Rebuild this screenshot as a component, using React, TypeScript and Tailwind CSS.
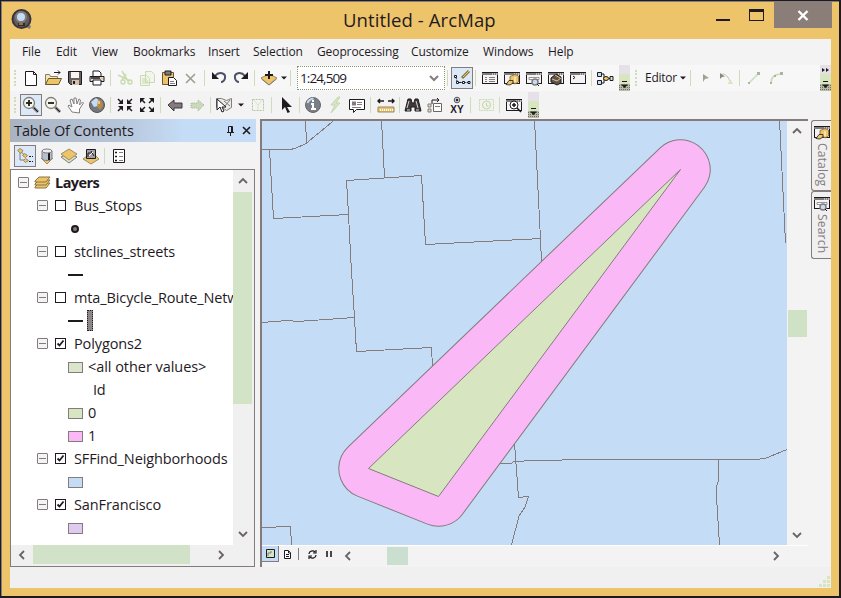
import React from 'react';
import type { ReactNode } from 'react';

const K = '#1f1a1f';
const G = '#847c7c';
const Y = '#edc46a';
const GR = '#d7e5c0';
const B = '#c5dcf6';

function Icon({ children, className = 'w-[22px]' }: { children: ReactNode; className?: string }) {
  return (
    <span className={`${className} flex h-[22px] shrink-0 items-center justify-center`}>
      <svg width="18" height="18" viewBox="0 0 18 18" fill="none" stroke={K} strokeWidth="1">
        {children}
      </svg>
    </span>
  );
}

function Active({ children }: { children: ReactNode }) {
  return (
    <span className="flex h-[22px] w-[22px] shrink-0 items-center justify-center border border-[#847c7c] bg-[#dbe8f7]">
      {children}
    </span>
  );
}

function Sep({ className = 'w-1.5' }: { className?: string }) {
  return (
    <span className={`${className} flex h-4 shrink-0 pl-0.5`}>
      <span className="h-full w-px bg-[#cfdcbb]" />
    </span>
  );
}

function Grip() {
  return (
    <span className="flex h-4 w-2.5 shrink-0 justify-center">
      <span className="h-full border-l-2 border-dotted border-[#cfdcbb]" />
    </span>
  );
}

function Caret({ className = 'w-2' }: { className?: string }) {
  return (
    <span className={`${className} flex shrink-0 justify-center`}>
      <svg width="6" height="4" viewBox="0 0 6 4" fill={K}>
        <path d="M0 0.5h6L3 3.5z" />
      </svg>
    </span>
  );
}

function Overflow({ more = false }: { more?: boolean }) {
  return (
    <span className="flex h-[26px] w-[11px] shrink-0 flex-col bg-[#d7e5c0]">
      <svg width="11" height="26" viewBox="0 0 11 26">
        <path d="M0 0h11v9H0z" fill="#e6e0e8" />
        <path d="M0 19h11v7H0z" fill="#b9bda8" />
        <path d="M0 20.500h11M0 22.500h11M0 24.500h11" stroke="#6f7060" strokeDasharray="1 1" />
        {more && <path d="M2 3l3 2-3 2zM6 3l3 2-3 2z" fill={K} />}
        <path d="M3 16h5v1H3zM2 19.500h7L5.500 23z" fill={K} />
      </svg>
    </span>
  );
}

const WindowFrame = ({ w = 16 }: { w?: number }) => (
  <>
    <rect x="1.5" y="3.500" width={w - 1} height="11" fill="#f4f4f4" stroke={K} />
    <path d={`M1 3h${w}v3H1z`} fill={G} stroke="none" />
    <path d={`M1 3.500h${w}`} stroke={K} />
    <path d="M11 5h5" stroke="#fff" strokeDasharray="1 1" />
  </>
);

const CatalogArt = () => (
  <>
    <WindowFrame />
    <path d="M7 7.500l5-2 3.500 1.500v6l-3.500 2-3-2-2-2z" fill={Y} stroke="#7d622c" strokeWidth=".8" />
    <path d="M3 15.500l3-4h4v2.500l-3 2z" fill={Y} stroke={K} strokeWidth=".8" />
    <path d="M12 8v5" stroke="#fff" />
  </>
);

const SearchArt = () => (
  <>
    <WindowFrame />
    <path d="M4 8.500h10v2H4z" fill="#fff" stroke={G} strokeWidth=".8" />
    <circle cx="10" cy="13" r="3" fill={B} stroke={G} strokeWidth="1.5" />
    <path d="M12 15l2 2" stroke={K} />
  </>
);

const Magnifier = ({ plus }: { plus: boolean }) => (
  <>
    <path d="M11 11l5 5" stroke={G} strokeWidth="3" />
    <path d="M12 12l4 4" stroke={K} />
    <circle cx="7" cy="7" r="5.5" fill="#f2f7ec" stroke={G} strokeWidth="1.3" />
    <path d="M4 7h6" stroke={K} strokeWidth="1.8" />
    {plus && <path d="M7 4v6" stroke={K} strokeWidth="1.8" />}
  </>
);

const menus: [string, string][] = [
  ['File', 'w-[34px]'],
  ['Edit', 'w-[36px]'],
  ['View', 'w-[41px]'],
  ['Bookmarks', 'w-[75px]'],
  ['Insert', 'w-[45px]'],
  ['Selection', 'w-[64px]'],
  ['Geoprocessing', 'w-[94px]'],
  ['Customize', 'w-[72px]'],
  ['Windows', 'w-[65px]'],
  ['Help', 'w-[40px]'],
];

function StandardToolbar() {
  return (
    <div className="flex h-[26px] items-center bg-[#f7f7f7]">
      <Grip />
      <Icon>
        <path d="M3.500 2.500h8l3 3v11h-11z" fill="#fff" />
        <path d="M11.500 2.500v3h3" />
      </Icon>
      <Icon>
        <path d="M1.500 15.500v-10h4l1 2h7v3" fill="#fae5a9" stroke={G} />
        <path d="M1.500 15.500l3-6h13l-3 6z" fill={Y} stroke="#6a5732" />
        <path d="M10 3.500h6M14 1.500l2 2-2 2" />
      </Icon>
      <Icon>
        <path d="M2.500 2.500h13v13h-11l-2-2z" fill="#68615f" />
        <path d="M5 3h8v6H5z" fill="#f8f6f1" stroke="none" />
        <path d="M6 11h7v5H6z" fill="#d1c2ab" stroke="none" />
        <path d="M8 12v3" strokeWidth="2" />
      </Icon>
      <Icon>
        <path d="M5 7V2h6l2 2v3" fill="#fff" />
        <path d="M2 7.500h14v5H2z" fill="#e1ded7" />
        <path d="M5 11h8v5H5z" fill="#fff" />
        <path d="M3 9h9" strokeWidth="1.500" />
        <path d="M13 9.500h2" stroke={Y} />
      </Icon>
      <Sep />
      <Icon>
        <g stroke="#c9dcb1" strokeWidth="1.500">
          <path d="M6 2l6 10M10 5l-4 6M2 6l12 6" />
          <circle cx="7" cy="13" r="2" />
          <circle cx="14" cy="13" r="2" />
        </g>
      </Icon>
      <Icon>
        <g stroke="#c9dcb1" fill="#f2f5ed">
          <path d="M7.500 2.500h6l3 3v8h-9zM2.500 6.500h6l3 3v7h-9z" />
          <path d="M4 10h5M4 12h6M4 14h6" />
        </g>
      </Icon>
      <Icon>
        <path d="M2.500 3.500h11v12h-11z" fill={Y} stroke="#6a5732" />
        <path d="M5 2h6v4H5z" fill={G} />
        <path d="M8.500 8.500h5l3 3v5h-8z" fill="#fff" />
        <path d="M10 12.500h4M10 14.500h5" stroke={G} />
      </Icon>
      <Icon>
        <path d="M4 5l9 9M13 5l-9 9" stroke="#969f88" strokeWidth="1.500" />
      </Icon>
      <Sep />
      <Icon>
        <path d="M5 7c4-5 11-3 10 2-.3 2-2 4-4 4" stroke="#4d5267" strokeWidth="2" />
        <path d="M2 3v7h7z" fill={K} stroke="none" />
      </Icon>
      <Icon>
        <path d="M13 7C9 2 2 4 3 9c.3 2 2 4 4 4" stroke="#4d5267" strokeWidth="2" />
        <path d="M16 3v7H9z" fill={K} stroke="none" />
      </Icon>
      <Sep />
      <Icon>
        <path d="M1 9l8-4 8 4-8 7z" fill={Y} stroke="#988866" />
        <path d="M1.500 10l7.500 6 7.500-6" stroke={G} />
        <path d="M9 2v8M5 6h8" strokeWidth="2" />
      </Icon>
      <Caret />
      <Sep className="w-[9px]" />
      <div className="flex h-6 w-[148px] shrink-0 items-center justify-between border border-dotted border-[#8a9670] bg-white pr-[5px] pl-0.5">
        <span className="text-[13.500px] tracking-[-0.9px]">1:24,509</span>
        <svg width="10" height="7" viewBox="0 0 10 7" fill="none" stroke={G} strokeWidth="2">
          <path d="M1 1l4 4 4-4" />
        </svg>
      </div>
      <Sep />
      <Active>
        <svg width="20" height="20" viewBox="0 0 20 20" fill="none" stroke={K}>
          <path d="M3.500 8l2 6.500H17" strokeDasharray="3 1" />
          <path d="M2.500 7.500h2v2h-2zM4.500 13.500h2v2h-2zM10.500 13.500h2v2h-2zM16 13.500h2v2h-2z" fill="#fff" />
          <path d="M10 10l7-7" stroke="#8b763c" strokeWidth="3" />
          <path d="M11 9l6-6" stroke={Y} />
        </svg>
      </Active>
      <Sep />
      <Icon>
        <WindowFrame />
        <path d="M4 8.500h2M8 8.500h6M4 10.500h2M8 10.500h6M4 12.500h2M8 12.500h6" stroke={G} />
      </Icon>
      <Icon><CatalogArt /></Icon>
      <Icon><SearchArt /></Icon>
      <Icon>
        <WindowFrame />
        <path d="M4 9l5-4 5 3v6l-4 2-6-3z" fill="#5d5350" />
        <path d="M5 10l5 2 4-3M8 6l5 3" stroke={Y} />
      </Icon>
      <Icon>
        <WindowFrame />
        <path d="M4 7l2 1.500L4 10" />
      </Icon>
      <Sep className="w-[5px]" />
      <Icon>
        <path d="M5 5h3v9H4M8 9.500h3M13 9.500h3" />
        <path d="M1.500 3.500h4v4h-4zM1.500 11.500h4v4h-4z" fill={B} />
        <ellipse cx="10" cy="9.500" rx="2.500" ry="2" fill={Y} />
        <path d="M14 7.500h3v4h-3z" fill={GR} />
      </Icon>
      <span className="flex pl-[3px]"><Overflow /></span>
      <span className="flex pl-px"><Grip /></span>
      <span className="w-[34px] shrink-0 pl-1 text-[12px] tracking-[-0.25px] whitespace-nowrap">Editor</span>
      <Caret className="w-[13px] pl-0.5" />
      <Sep className="w-[5px]" />
      <Icon>
        <path d="M8 5v8l2-3 4-1z" fill="#9aa68f" stroke="none" />
      </Icon>
      <Icon>
        <path d="M3 4v6l2-2 3-.5z" fill="#858b7b" stroke="none" />
        <path d="M5 5c4 0 6 3 8 7" stroke="#b6c9a0" />
        <path d="M11 14l3-3 2 4h-5z" fill={GR} stroke="none" />
      </Icon>
      <Sep className="w-[6px]" />
      <Icon>
        <path d="M4 14L14 4" stroke="#cbdcb8" strokeWidth="1.500" />
        <path d="M12 3h3v3h-3zM3 13h2v2H3z" fill="#a9b89a" stroke="none" />
      </Icon>
      <Icon>
        <path d="M4 14c0-6 4-9 11-9" stroke="#cbdcb8" strokeWidth="1.500" />
        <path d="M13 3h3v3h-3zM3 13h2v2H3zM7 6h2v2H7z" fill="#a9b89a" stroke="none" />
      </Icon>
      <span className="ml-auto flex"><Overflow more /></span>
    </div>
  );
}

function ToolsToolbar() {
  return (
    <div className="flex h-7 items-center">
      <Grip />
      <Active>
        <svg width="18" height="18" viewBox="0 0 18 18" fill="none"><Magnifier plus /></svg>
      </Active>
      <Icon><Magnifier plus={false} /></Icon>
      <Icon>
        <path d="M6 16l-4-6 1-1 3 2-2-7 2-1 2 5V2l2 0 1 6 2-5 1.500 1-1 5 3-3 1 1-4 6v4z" fill="#fff" stroke="#847c7c" />
      </Icon>
      <Icon>
        <circle cx="9" cy="9" r="7.500" fill="#737781" stroke="#5a514e" />
        <path d="M3 6l5-4 4 3-2 5-4 1z" fill={B} stroke="none" />
        <path d="M10 4l4 1 1 5-3 4-3-3z" fill="#b58b45" stroke="none" />
        <path d="M10 5h2v3h-2z" fill={Y} stroke="none" />
      </Icon>
      <Sep />
      <Icon>
        <path d="M2 3l4 4M16 3l-4 4M2 15l4-4M16 15l-4-4" strokeWidth="1.500" />
        <path d="M7 3v5H2zM11 3v5h5zM7 15v-5H2zM11 15v-5h5z" fill={K} stroke="none" />
      </Icon>
      <Icon>
        <path d="M3 3l4 4M15 3l-4 4M3 15l4-4M15 15l-4-4" strokeWidth="1.500" />
        <path d="M2 2h5L2 7zM16 2h-5l5 5zM2 16h5l-5-5zM16 16h-5l5-5z" fill={K} stroke="none" />
      </Icon>
      <Sep />
      <Icon>
        <path d="M2 9l6-5v3h8v5H8v3z" fill={G} stroke="#3c383c" />
      </Icon>
      <Icon>
        <path d="M16 9l-6-5v3H3v5h7v3z" fill="#c9d9b9" stroke="#a8b49c" strokeDasharray="1 1" />
      </Icon>
      <Sep className="w-[5px]" />
      <Icon>
        <path d="M1.500 2.500h5l5 2 5-2v9l-5 3-4-3h-6z" fill="#e9ebe6" stroke={G} />
        <path d="M9 5l6 5M15 4l-5 6" stroke={G} />
        <path d="M2 3v11l3-3 2 5 2-1-2-4h4z" fill="#fff" />
      </Icon>
      <Caret className="w-3" />
      <Icon>
        <path d="M3.500 3.500h11v11h-11z" stroke="#b4c3a1" strokeDasharray="2 1" />
        <path d="M5 4l4 5 4-5M9 9v5" stroke={GR} />
      </Icon>
      <Sep />
      <Icon>
        <path d="M5 1v13l3-3 2.500 6 2.500-1-3-5h5z" fill={K} stroke="none" />
      </Icon>
      <Sep className="w-[5px]" />
      <Icon>
        <circle cx="9" cy="9" r="7.500" fill="#7b7f85" stroke="#65676b" />
        <path d="M3.500 7c1-3 3-4 6-4.500" stroke={B} strokeWidth="2" />
        <path d="M9 4v2M7 8h2v5M7 13h5" stroke="#fff" strokeWidth="2" />
      </Icon>
      <Icon>
        <path d="M12 1L5 9h4l-4 8 9-10h-4l4-6z" fill={GR} stroke="#c5d6b1" />
      </Icon>
      <Icon>
        <path d="M1.500 3.500h15v10h-8l-3 3v-3h-4z" fill="#fff" />
        <path d="M4 5.500h4v4H4z" fill={G} stroke="none" />
        <path d="M9 6.500h5M9 8.500h5M4 11.500h9" stroke={G} />
      </Icon>
      <Sep className="w-[7px]" />
      <Icon>
        <path d="M1 5h6M11 5h6M3 3L1 5l2 2M15 3l2 2-2 2" strokeWidth="1.500" />
        <path d="M1 11h16v5H1z" fill={Y} stroke="#9d8a60" />
        <path d="M3 14h14" stroke="#fff" strokeDasharray="1 1" strokeWidth="2" />
      </Icon>
      <Sep className="w-[5px]" />
      <Icon>
        <path d="M4 3h3l1 4h2l1-4h3l3 12h-6v-4H7v4H1z" fill="#3f393c" stroke={K} />
        <path d="M5 5l-2 7M12 5l2 7M3 14h3M12 14h3" stroke="#fff" strokeWidth=".8" />
      </Icon>
      <Icon>
        <path d="M7.500 7.500h8v8h-8z" fill="#fff" stroke="#69675e" />
        <path d="M2 8h3v3H2zM2 13h3v3H2z" fill={GR} stroke={G} />
        <path d="M6 8V4h7M11 2l2 2-2 2" />
        <path d="M9 10.500h5" stroke={G} />
      </Icon>
      <Icon>
        <circle cx="9" cy="4" r="2.800" stroke="#4e5161" />
        <circle cx="9" cy="4" r="1" fill={K} />
        <text x="9" y="17" textAnchor="middle" fill={K} stroke="none" fontSize="10" fontWeight="700" fontFamily="Liberation Sans">XY</text>
      </Icon>
      <Sep className="w-[7px]" />
      <Icon>
        <path d="M2.500 3.500h14v11h-14z" fill="#f0f4e9" stroke="#c9d8b8" strokeDasharray="2 1" />
        <circle cx="9.500" cy="9" r="4" stroke="#c3d2b2" />
        <path d="M9.500 7v3h2" stroke="#c3d2b2" />
      </Icon>
      <Sep />
      <Icon>
        <WindowFrame />
        <circle cx="9" cy="9" r="4" fill="#fff" />
        <path d="M7 9h4M9 7v4M12 12l4 4" strokeWidth="1.500" />
      </Icon>
      <span className="flex pl-[3px]"><Overflow /></span>
    </div>
  );
}

function Expander() {
  return (
    <span className="flex size-[11px] shrink-0 items-center justify-center rounded-[1px] border border-[#847c7c] bg-[#f3f5f4]">
      <span className="h-px w-[7px] bg-[#847c7c]" />
    </span>
  );
}

function Check({ on }: { on: boolean }) {
  return (
    <span className="ml-[7px] flex size-[11px] shrink-0 border border-[#1f1a1f] bg-white">
      {on && (
        <svg width="9" height="9" viewBox="0 0 9 9" fill="none" stroke={K} strokeWidth="1.800">
          <path d="M1.500 4.500l2 2 4-5" />
        </svg>
      )}
    </span>
  );
}

function LayerRow({ name, on = false, tracking = 'tracking-[-0.12px]' }: { name: string; on?: boolean; tracking?: string }) {
  return (
    <div className="flex h-[23px] items-center pl-[26px]">
      <Expander />
      <Check on={on} />
      <span className={`${tracking} pl-2 text-[14.500px] leading-[23px] whitespace-nowrap`}>{name}</span>
    </div>
  );
}

function Swatch({ color, label = '' }: { color: string; label?: string }) {
  return (
    <div className="flex h-[23px] items-center pl-[57px]">
      <span className={`${color} mt-px h-[11px] w-[15px] shrink-0 border border-[#847c7c]`} />
      <span className="pl-[5px] text-[14.500px] leading-[23px] tracking-[-0.05px] whitespace-nowrap">{label}</span>
    </div>
  );
}

function Chevron({ turn = '' }: { turn?: string }) {
  return (
    <svg className={turn} width="10" height="10" viewBox="0 0 10 10" fill="none" stroke="#6b6363" strokeWidth="1.800">
      <path d="M1 7l4-4 4 4" />
    </svg>
  );
}

function Contents() {
  return (
    <section className="flex w-[246px] shrink-0 flex-col">
      <header className="flex h-[23px] shrink-0 items-center justify-between bg-[linear-gradient(to_right,#a9b3c2,#b6c6da_45%,#c5dcf6_70%)] pr-[5px] pl-1">
        <h2 className="pt-px text-[14.500px] tracking-[-0.1px] whitespace-nowrap">Table Of Contents</h2>
        <span className="flex items-center gap-[7px]">
          <svg width="9" height="10" viewBox="0 0 9 10" fill="none" stroke={K}>
            <path d="M2.500 6V.5h4V6M1 6.500h7M4.500 7v3" />
            <path d="M5.500 1v5" />
          </svg>
          <svg width="9" height="9" viewBox="0 0 9 9" fill="none" stroke={K} strokeWidth="1.600">
            <path d="M1 1l7 7M8 1L1 8" />
          </svg>
        </span>
      </header>
      <div className="flex h-[27px] shrink-0 items-center pt-px pl-1">
        <Active>
          <svg width="18" height="18" viewBox="0 0 18 18" fill="none" stroke="#9b8a61">
            <path d="M4 5v8h5M5 5l5 4M7 8h4" stroke={G} />
            <path d="M1.500 3.500l2.500-2 3 2-2 3zM6.500 8.500l2-2 3 2-2 2zM7.500 13.500l2-2 3 2-3 2z" fill={Y} />
            <path d="M13 9.500h4M13 14.500h4" stroke={K} strokeDasharray="2 1" />
          </svg>
        </Active>
        <Icon>
          <path d="M3 11l6 6 6-6" fill={Y} stroke="#a28d5c" />
          <path d="M4 4v8c2 2 8 2 10 0V4z" fill="#b4c0ce" stroke={G} />
          <path d="M11 5v8" stroke={K} strokeWidth="2" />
          <ellipse cx="9" cy="4" rx="5" ry="2" fill="#e8eef4" stroke={G} />
        </Icon>
        <Icon>
          <path d="M1 10l8 6 8-6-8-4z" fill={GR} stroke={G} />
          <path d="M1 7l8-5 8 5-8 6z" fill={Y} stroke="#a28d5c" />
        </Icon>
        <Icon>
          <path d="M1 12l4-3h9l3 3-8 5z" fill={Y} stroke="#a28d5c" />
          <path d="M4.500 2.500h9v9h-9z" fill="#a4a2a5" />
          <path d="M6 10V6h5M9 4l3 5" stroke={K} />
          <path d="M7 9l4-4" stroke="#fff" />
        </Icon>
        <Sep />
        <Icon>
          <path d="M3.500 2.500h11v13h-11z" fill="#fff" />
          <path d="M5 5.500h2M5 9.500h2M5 13.500h2" stroke={K} strokeWidth="1.500" />
          <path d="M9 5.500h4M9 9.500h4M9 13.500h4" stroke={G} />
        </Icon>
      </div>
      <div className="flex w-[245px] grow flex-col border border-[#847c7c] bg-[#f0f0f0]">
        <div className="flex h-[375px]">
          <div className="h-full w-[222px] overflow-hidden bg-white pt-px">
            <div className="flex h-[23px] items-center pl-[7px]">
              <Expander />
              <svg className="ml-[5px]" width="17" height="15" viewBox="0 0 17 15" fill={Y} stroke="#8a7441">
                <path d="M1 12l4-4h11l-4 5H1z" />
                <path d="M1 9l4-4h11l-4 5H1z" />
                <path d="M1 6l4-4h11l-4 5H1z" />
              </svg>
              <span className="pl-1 text-[14.500px] leading-[23px] font-bold tracking-[-0.55px]">Layers</span>
            </div>
            <LayerRow name="Bus_Stops" />
            <div className="flex h-[23px] items-center pl-[60px]">
              <span className="size-2 rounded-full border-2 border-[#1f1a1f] bg-[#847c7c]" />
            </div>
            <LayerRow name="stclines_streets" />
            <div className="flex h-[23px] items-center pl-[57px]">
              <span className="h-0.5 w-[15px] bg-[#1f1a1f]" />
            </div>
            <LayerRow name="mta_Bicycle_Route_Netw" />
            <div className="flex h-[23px] items-center gap-1 pl-[57px]">
              <span className="h-0.5 w-[15px] bg-[#1f1a1f]" />
              <span className="h-[21px] w-1.5 border border-dotted border-[#1f1a1f] bg-[#8c8688]" />
            </div>
            <LayerRow name="Polygons2" on />
            <Swatch color="bg-[#dbe5cc]" label="<all other values>" />
            <div className="h-[23px] pl-[82px] text-[14.500px] leading-[23px] tracking-[-0.35px]">Id</div>
            <Swatch color="bg-[#d7e5c0]" label="0" />
            <Swatch color="bg-[#fab8f7]" label="1" />
            <LayerRow name="SFFind_Neighborhoods" on />
            <Swatch color="bg-[#c5dcf6]" />
            <LayerRow name="SanFrancisco" on />
            <Swatch color="bg-[#dfcbf0]" />
          </div>
          <div className="flex w-[19px] flex-col items-center">
            <span className="flex h-[22px] items-center"><Chevron /></span>
            <span className="h-[212px] w-full bg-[#d3e3c6]" />
            <span className="mt-auto flex h-[22px] items-center"><Chevron turn="rotate-180" /></span>
          </div>
        </div>
        <div className="flex h-[19px] w-[222px] items-center">
          <span className="flex w-[22px] justify-center"><Chevron turn="-rotate-90" /></span>
          <span className="h-full w-[157px] bg-[#d1e2c9]" />
          <span className="ml-auto flex w-[22px] justify-center pr-0.5"><Chevron turn="rotate-90" /></span>
        </div>
      </div>
    </section>
  );
}

function MapCanvas() {
  return (
    <svg className="block" width="525" height="424" viewBox="262 121 525 424" fill="none" stroke={G} strokeWidth="1">
      <path d="M262 121h525v424H262z" fill={B} stroke="none" />
      <g shapeRendering="crispEdges">
        <path d="M262 149.500H290L295 148.500 306 143.500 334.500 120M305.500 120L306.500 143M269.500 149.500L273.500 218.500 348.500 214.500M381.500 120L384.500 177.500M348.500 214.500L346.500 180.500 421.500 175.500 425.500 244.500 541.500 238.500M534.500 120L540.500 239 541.500 262M348.500 214.500L351 263 354.500 318 356.500 351.500 431.500 347.500 432.500 367M262 322.500L288 320.500 297 321.500 354.500 317.500" />
        <path d="M779.500 120L785.500 243M500 463.500H511L514 461.500 535 460.500 590 459.500H755L765 458.500 787 449.500M514.500 443L518.500 497.500 528.500 496.500 525 507 519 516 511.500 545M718.500 460V480L716.500 487 717 505 719.500 545M262 527.500L290.500 526.500 291.500 545" />
      </g>
      <path d="M680.500 169.500L368.500 468.500 438.500 496.500z" stroke={G} strokeWidth="60.500" strokeLinejoin="round" />
      <path d="M680.500 169.500L368.500 468.500 438.500 496.500z" stroke="#fab8f7" strokeWidth="58.500" strokeLinejoin="round" />
      <path d="M680.500 169.500L368.500 468.500 438.500 496.500z" fill={GR} strokeLinejoin="bevel" />
    </svg>
  );
}

function MapView() {
  return (
    <section className="ml-1 flex w-[548px] shrink-0 flex-col border-t-2 border-l-2 border-[#847c7c]">
      <div className="flex h-[424px]">
        <MapCanvas />
        <div className="ml-px flex w-[19px] flex-col items-center">
          <span className="flex h-5 items-center pr-0.5"><Chevron /></span>
          <span className="mt-[169px] h-[27px] w-full bg-[#d0e2c6]" />
          <span className="mt-auto flex h-5 items-center pr-0.5"><Chevron turn="rotate-180" /></span>
        </div>
      </div>
      <div className="flex h-[21px] items-center border-t border-white">
        <span className="flex h-4 w-[17px] items-center justify-center self-start border-r border-b border-[#847c7c] bg-[#c5dcf6]">
          <svg width="9" height="9" viewBox="0 0 9 9" fill={GR} stroke={K}>
            <path d="M.5.500h8v8h-8z" />
            <path d="M2 7V4h3V2" stroke={G} />
          </svg>
        </span>
        <svg className="mb-1 ml-1" width="9" height="9" viewBox="0 0 9 9" fill="#fff" stroke={K}>
          <path d="M1.500.500h4l2 2v6h-6z" />
          <path d="M3 4.500h3M3 6.500h3M5.500 1v2h2" />
        </svg>
        <span className="mb-1 ml-[6px] h-3 w-px bg-[#847c7c]" />
        <svg className="mb-1 ml-[9px]" width="9" height="9" viewBox="0 0 9 9" fill="none" stroke={K} strokeWidth="1.200">
          <path d="M1 4c0-3 4-4 6-2M8 5c0 3-4 4-6 2M8 0v3H5M1 9V6h3" />
        </svg>
        <svg className="mb-1 ml-[9px]" width="7" height="7" viewBox="0 0 7 7" fill="#4b4647">
          <path d="M0 0h2v6H0zM4 0h2v6H4z" />
        </svg>
        <span className="ml-[10px] flex"><Chevron turn="-rotate-90" /></span>
        <span className="ml-[34px] h-[18px] w-[21px] bg-[#cbdfd0]" />
        <span className="mr-[27px] ml-auto flex"><Chevron turn="rotate-90" /></span>
      </div>
    </section>
  );
}

function DockTab({ label, art, className }: { label: string; art: ReactNode; className: string }) {
  return (
    <div className={`${className} flex flex-col items-center rounded-l-[3px] border border-r-0 border-[#847c7c] bg-[#f0f0f0]`}>
      <svg className="mt-0.5 shrink-0" width="18" height="18" viewBox="0 0 18 18" fill="none">
        {art}
      </svg>
      <span className="mt-0.5 text-[12px] leading-[18px] tracking-[0.2px] whitespace-nowrap text-[#847c7c] [writing-mode:vertical-rl]">{label}</span>
    </div>
  );
}

export default function App() {
  return (
    <div className="flex h-[598px] w-[841px] flex-col overflow-hidden border-t border-r-2 border-b-2 border-l border-[#1f1a1f] bg-[#edc46a] font-['Open_Sans','Noto_Sans',sans-serif] text-[#1f1a1f]">
      <div className="flex grow flex-col border border-r-0 border-b-0 border-[#847c7c]">
        <header className="flex h-[37px] shrink-0 pl-[9px]">
          <svg className="mt-[7px] shrink-0" width="23" height="22" viewBox="0 0 23 22">
            <path d="M16 14l4 3-1 3-5-2z" fill={G} />
            <circle cx="10.500" cy="10" r="9" fill="#635b5d" stroke="#3a3338" strokeWidth="2" />
            <circle cx="10" cy="8" r="5" fill={B} stroke={G} strokeWidth="2" />
            <path d="M7 14h7v3H7z" fill="#2d292d" />
            <path d="M8 15h4" stroke={Y} />
          </svg>
          <h1 className="grow pt-[5px] pl-[309px] text-[18.500px] leading-[26px] tracking-[0.1px] whitespace-nowrap">Untitled - ArcMap</h1>
          <div className="flex">
            <span className="mt-[17px] h-0.5 w-3.5 bg-[#1f1a1f]" />
            <span className="mt-[7px] ml-[19px] h-3 w-[15px] border border-t-[3px] border-[#1f1a1f]" />
            <span className="mr-[7px] ml-[10px] flex h-[26px] w-[58px] items-center justify-center bg-[#8b7e78]">
              <svg width="12" height="11" viewBox="0 0 12 11" fill="none" stroke="#fff" strokeWidth="2.400">
                <path d="M1.500 1l9 9M10.500 1l-9 9" />
              </svg>
            </span>
          </div>
        </header>
        <main className="mr-2 ml-2 flex h-[549px] shrink-0 flex-col bg-[#f3f3f3]">
          <nav className="flex h-[26px] shrink-0 items-center pl-3 text-[12px] tracking-[-0.1px]">
            {menus.map(([name, width]) => (
              <span key={name} className={`${width} shrink-0 whitespace-nowrap`}>{name}</span>
            ))}
          </nav>
          <StandardToolbar />
          <ToolsToolbar />
          <div className="flex h-[448px] shrink-0">
            <Contents />
            <MapView />
            <aside className="ml-[3px] flex w-5 flex-col pt-px">
              <DockTab label="Catalog" className="h-[71px]" art={<CatalogArt />} />
              <DockTab label="Search" className="h-[68px]" art={<SearchArt />} />
            </aside>
          </div>
          <footer className="flex grow items-end justify-end bg-[#f0f0f0]">
            <svg width="12" height="12" viewBox="0 0 12 12" fill={GR}>
              <path d="M8 0h3v3H8zM4 4h3v3H4zM8 4h3v3H8zM0 8h3v3H0zM4 8h3v3H4zM8 8h3v3H8z" />
            </svg>
          </footer>
        </main>
      </div>
    </div>
  );
}
